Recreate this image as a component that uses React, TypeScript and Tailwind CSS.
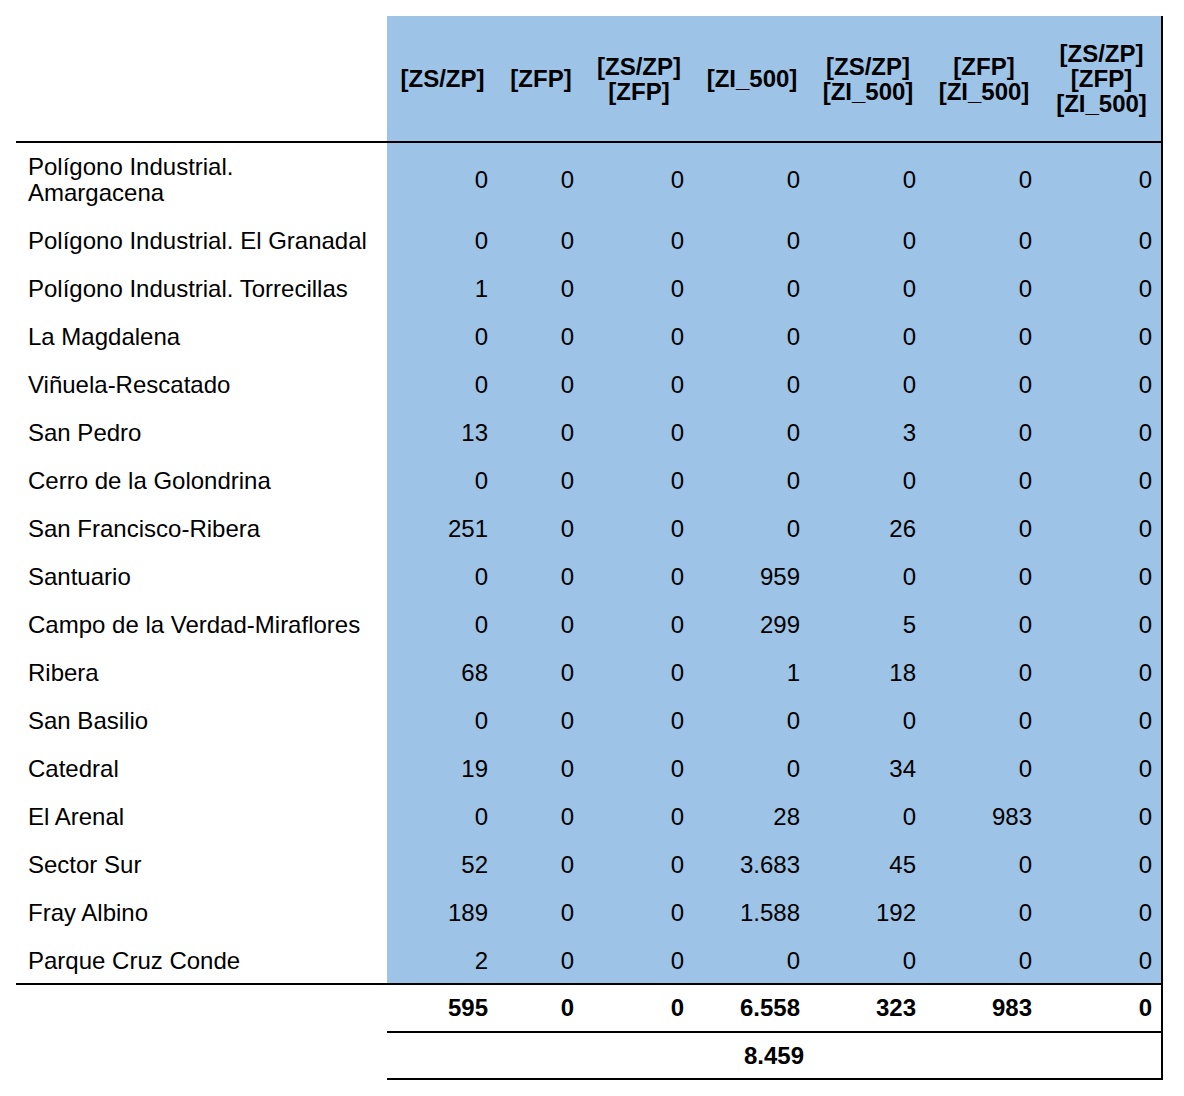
import React from 'react';

const headers: string[][] = [
  ['[ZS/ZP]'],
  ['[ZFP]'],
  ['[ZS/ZP]', '[ZFP]'],
  ['[ZI_500]'],
  ['[ZS/ZP]', '[ZI_500]'],
  ['[ZFP]', '[ZI_500]'],
  ['[ZS/ZP]', '[ZFP]', '[ZI_500]'],
];

const rows: { name: string[]; values: string[] }[] = [
  { name: ['Polígono Industrial.', 'Amargacena'], values: ['0', '0', '0', '0', '0', '0', '0'] },
  { name: ['Polígono Industrial. El Granadal'], values: ['0', '0', '0', '0', '0', '0', '0'] },
  { name: ['Polígono Industrial. Torrecillas'], values: ['1', '0', '0', '0', '0', '0', '0'] },
  { name: ['La Magdalena'], values: ['0', '0', '0', '0', '0', '0', '0'] },
  { name: ['Viñuela-Rescatado'], values: ['0', '0', '0', '0', '0', '0', '0'] },
  { name: ['San Pedro'], values: ['13', '0', '0', '0', '3', '0', '0'] },
  { name: ['Cerro de la Golondrina'], values: ['0', '0', '0', '0', '0', '0', '0'] },
  { name: ['San Francisco-Ribera'], values: ['251', '0', '0', '0', '26', '0', '0'] },
  { name: ['Santuario'], values: ['0', '0', '0', '959', '0', '0', '0'] },
  { name: ['Campo de la Verdad-Miraflores'], values: ['0', '0', '0', '299', '5', '0', '0'] },
  { name: ['Ribera'], values: ['68', '0', '0', '1', '18', '0', '0'] },
  { name: ['San Basilio'], values: ['0', '0', '0', '0', '0', '0', '0'] },
  { name: ['Catedral'], values: ['19', '0', '0', '0', '34', '0', '0'] },
  { name: ['El Arenal'], values: ['0', '0', '0', '28', '0', '983', '0'] },
  { name: ['Sector Sur'], values: ['52', '0', '0', '3.683', '45', '0', '0'] },
  { name: ['Fray Albino'], values: ['189', '0', '0', '1.588', '192', '0', '0'] },
  { name: ['Parque Cruz Conde'], values: ['2', '0', '0', '0', '0', '0', '0'] },
];

const totals = ['595', '0', '0', '6.558', '323', '983', '0'];

export default function App() {
  return (
    <div className="min-h-screen bg-white pt-[16px] pl-[16px] font-['Liberation_Sans',Arial,sans-serif] text-[24px] text-black">
      <table className="table-fixed w-[1147px] border-separate border-spacing-0">
        <colgroup>
          <col className="w-[371px]" />
          <col className="w-[111px]" />
          <col className="w-[86px]" />
          <col className="w-[110px]" />
          <col className="w-[116px]" />
          <col className="w-[116px]" />
          <col className="w-[116px]" />
          <col className="w-[121px]" />
        </colgroup>
        <thead>
          <tr>
            <th className="border-b-2 border-black bg-white" />
            {headers.map((h, i) => (
              <th
                key={i}
                className={
                  i === headers.length - 1
                    ? 'bg-[#9dc3e6] border-b-2 border-r-2 border-black px-[10px] py-[25px] align-middle text-center font-bold leading-[25px]'
                    : 'bg-[#9dc3e6] border-b-2 border-black px-[10px] py-[25px] align-middle text-center font-bold leading-[25px]'
                }
              >
                {h.map((line, j) => (
                  <div key={j}>{line}</div>
                ))}
              </th>
            ))}
          </tr>
        </thead>
        <tbody>
          {rows.map((r, ri) => {
            const last = ri === rows.length - 1;
            return (
              <tr key={ri}>
                <td
                  className={
                    last
                      ? 'border-b-2 border-black pl-[12px] pr-[8px] pt-[11px] pb-[9px] align-middle text-left leading-[26px] whitespace-nowrap'
                      : 'pl-[12px] pr-[8px] py-[11px] align-middle text-left leading-[26px] whitespace-nowrap'
                  }
                >
                  {r.name.map((line, j) => (
                    <div key={j}>{line}</div>
                  ))}
                </td>
                {r.values.map((v, vi) => {
                  const edge = vi === r.values.length - 1;
                  let cls = 'bg-[#9dc3e6] pr-[10px] pl-[4px] py-[11px] align-middle text-right leading-[26px]';
                  if (last && edge) cls = 'bg-[#9dc3e6] border-b-2 border-r-2 border-black pr-[9px] pl-[4px] pt-[11px] pb-[9px] align-middle text-right leading-[26px]';
                  else if (last) cls = 'bg-[#9dc3e6] border-b-2 border-black pr-[10px] pl-[4px] pt-[11px] pb-[9px] align-middle text-right leading-[26px]';
                  else if (edge) cls = 'bg-[#9dc3e6] border-r-2 border-black pr-[9px] pl-[4px] py-[11px] align-middle text-right leading-[26px]';
                  return (
                    <td key={vi} className={cls}>
                      {v}
                    </td>
                  );
                })}
              </tr>
            );
          })}
          <tr>
            <td />
            {totals.map((t, ti) => (
              <td
                key={ti}
                className={
                  ti === totals.length - 1
                    ? 'border-b-2 border-r-2 border-black pr-[9px] pl-[4px] py-[10px] text-right font-bold leading-[26px]'
                    : 'border-b-2 border-black pr-[10px] pl-[4px] py-[10px] text-right font-bold leading-[26px]'
                }
              >
                {t}
              </td>
            ))}
          </tr>
          <tr>
            <td />
            <td colSpan={7} className="border-b-2 border-r-2 border-black pt-[10px] pb-[9px] text-center font-bold leading-[26px]">
              8.459
            </td>
          </tr>
        </tbody>
      </table>
    </div>
  );
}
